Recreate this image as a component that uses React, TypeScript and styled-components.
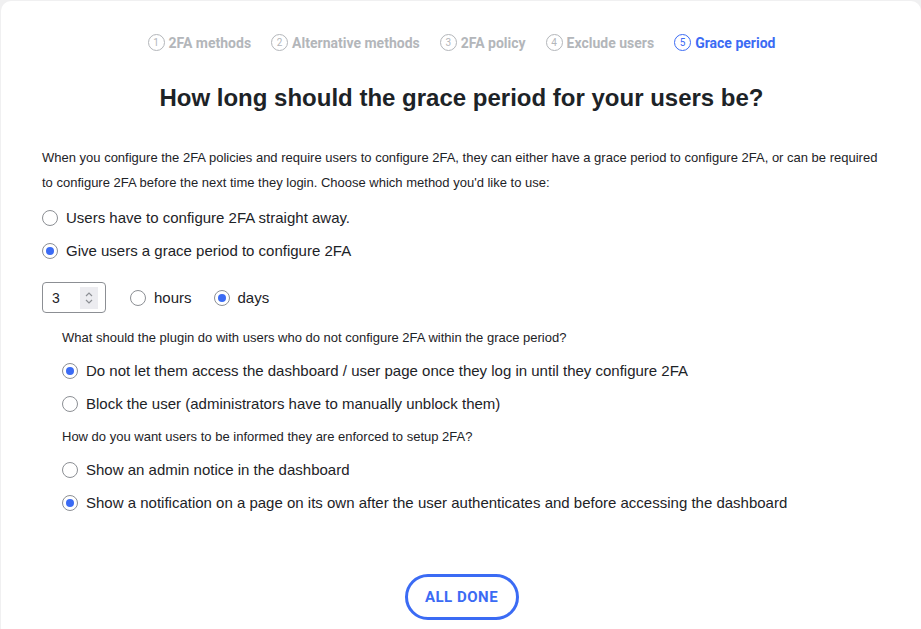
import React, { useState } from 'react'
import styled, { createGlobalStyle } from 'styled-components'

const Global = createGlobalStyle`
  html, body { margin: 0; padding: 0; background: #f0f0f1; }
  body { font-family: "Liberation Sans", Arial, sans-serif; color: #1d2327; }
`

const BLUE = '#3b6bf4'

const Card = styled.div`
  margin: 1px 0 0 1px;
  background: #fff;
  border-radius: 10px;
  min-height: 640px;
  padding: 33px 40px 0 41px;
  box-sizing: border-box;
`

const Steps = styled.ol`
  list-style: none;
  margin: 0;
  padding: 0;
  display: flex;
  justify-content: center;
  gap: 20px;
`

const Step = styled.li<{ $active?: boolean }>`
  display: flex;
  align-items: center;
  gap: 4px;
  font-family: Roboto, "Liberation Sans", sans-serif;
  font-weight: 700;
  font-size: 14px;
  color: ${p => (p.$active ? BLUE : '#b3b6ba')};
`

const StepNum = styled.span<{ $active?: boolean }>`
  width: 17px;
  height: 17px;
  box-sizing: border-box;
  border-radius: 50%;
  border: 1px solid ${p => (p.$active ? BLUE : '#b3b6ba')};
  display: inline-flex;
  align-items: center;
  justify-content: center;
  font-size: 10px;
  font-weight: 400;
`

const Title = styled.h1`
  margin: 33px 0 33px;
  text-align: center;
  font-size: 24px;
  font-weight: 700;
  color: #1d2327;
`

const Intro = styled.p`
  margin: 0 0 6px;
  font-size: 13px;
  line-height: 25px;
  color: #1d2327;
`

const Group = styled.div<{ $indent?: number }>`
  padding-left: ${p => p.$indent ?? 0}px;
`

const Question = styled.p`
  margin: 7px 0 6px;
  font-size: 13px;
  line-height: 20px;
`

const Option = styled.label<{ $inline?: boolean }>`
  display: ${p => (p.$inline ? 'inline-flex' : 'flex')};
  align-items: center;
  gap: 8px;
  height: 33px;
  font-size: 15px;
  cursor: pointer;
`

const Dot = styled.span<{ $on?: boolean }>`
  width: 16px;
  height: 16px;
  box-sizing: border-box;
  border-radius: 50%;
  border: 1px solid #8c8f94;
  background: #fff;
  display: inline-flex;
  align-items: center;
  justify-content: center;
  flex: none;
  &::after {
    content: '';
    width: 8px;
    height: 8px;
    border-radius: 50%;
    background: ${p => (p.$on ? BLUE : 'transparent')};
  }
`

const PeriodRow = styled.div`
  display: flex;
  align-items: center;
  gap: 22px;
  margin: 14px 0 14px;
`

const NumberBox = styled.div`
  width: 64px;
  height: 31px;
  margin-right: 2px;
  box-sizing: border-box;
  border: 1px solid #8c8f94;
  border-radius: 4px;
  display: flex;
  align-items: center;
  justify-content: space-between;
  padding: 0 7px 0 9px;
  font-size: 14px;
`

const Spinner = styled.span`
  width: 18px;
  height: 22px;
  background: #ececf0;
  display: inline-flex;
  align-items: center;
  justify-content: center;
`

const Footer = styled.div`
  display: flex;
  justify-content: center;
  margin-top: 55px;
`

const DoneButton = styled.button`
  width: 114px;
  height: 46px;
  border: 3px solid ${BLUE};
  border-radius: 23px;
  background: #fff;
  color: ${BLUE};
  font-family: Roboto, "Liberation Sans", sans-serif;
  font-weight: 700;
  font-size: 15px;
  letter-spacing: 0.5px;
  cursor: pointer;
`

const steps = ['2FA methods', 'Alternative methods', '2FA policy', 'Exclude users', 'Grace period']

type RadioProps = { on: boolean; label: string; onPick: () => void; inline?: boolean }
const Radio = ({ on, label, onPick, inline }: RadioProps) => (
  <Option $inline={inline} onClick={onPick}>
    <Dot $on={on} />
    {label}
  </Option>
)

export default function App() {
  const [grace, setGrace] = useState('grace')
  const [unit, setUnit] = useState('days')
  const [action, setAction] = useState('block-access')
  const [notify, setNotify] = useState('page')

  return (
    <>
      <Global />
      <Card>
        <Steps>
          {steps.map((s, i) => (
            <Step key={s} $active={i === 4}>
              <StepNum $active={i === 4}>{i + 1}</StepNum>
              {s}
            </Step>
          ))}
        </Steps>
        <Title>How long should the grace period for your users be?</Title>
        <Intro>
          When you configure the 2FA policies and require users to configure 2FA, they can either have a grace period to
          configure 2FA, or can be required to configure 2FA before the next time they login. Choose which method you'd
          like to use:
        </Intro>
        <Radio on={grace === 'now'} onPick={() => setGrace('now')} label="Users have to configure 2FA straight away." />
        <Radio on={grace === 'grace'} onPick={() => setGrace('grace')} label="Give users a grace period to configure 2FA" />
        <PeriodRow>
          <NumberBox>
            3
            <Spinner>
              <svg width="10" height="16" viewBox="0 0 10 16" fill="none" stroke="#8c8f94" strokeWidth="1.2">
                <path d="M2 6l3-3 3 3" />
                <path d="M2 10l3 3 3-3" />
              </svg>
            </Spinner>
          </NumberBox>
          <Radio inline on={unit === 'hours'} onPick={() => setUnit('hours')} label="hours" />
          <Radio inline on={unit === 'days'} onPick={() => setUnit('days')} label="days" />
        </PeriodRow>
        <Group $indent={20}>
          <Question>What should the plugin do with users who do not configure 2FA within the grace period?</Question>
          <Radio
            on={action === 'block-access'}
            onPick={() => setAction('block-access')}
            label="Do not let them access the dashboard / user page once they log in until they configure 2FA"
          />
          <Radio
            on={action === 'block-user'}
            onPick={() => setAction('block-user')}
            label="Block the user (administrators have to manually unblock them)"
          />
          <Question>How do you want users to be informed they are enforced to setup 2FA?</Question>
          <Radio on={notify === 'notice'} onPick={() => setNotify('notice')} label="Show an admin notice in the dashboard" />
          <Radio
            on={notify === 'page'}
            onPick={() => setNotify('page')}
            label="Show a notification on a page on its own after the user authenticates and before accessing the dashboard"
          />
        </Group>
        <Footer>
          <DoneButton>ALL DONE</DoneButton>
        </Footer>
      </Card>
    </>
  )
}
